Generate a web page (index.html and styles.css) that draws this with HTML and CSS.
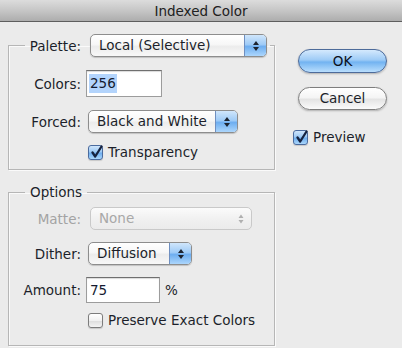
FILE: index.html
```html
<!DOCTYPE html>
<html>
<head>
<meta charset="utf-8">
<title>Indexed Color</title>
<link rel="stylesheet" href="styles.css">
</head>
<body>
<div class="titlebar">Indexed Color</div>
<div class="dialog">
  <div class="left">
    <fieldset class="group g1">
      <legend class="legend-row">
        <span class="lbl lbl-legend">Palette:</span>
        <span class="popup popup-palette"><span class="ptext">Local (Selective)</span><span class="stepper"><svg width="8" height="12" viewBox="0 0 8 12"><path d="M4 1 L7 5 L1 5 Z M4 11 L7 7 L1 7 Z" fill="#1d2430"/></svg></span></span>
      </legend>
      <div class="row row-colors">
        <span class="lbl">Colors:</span>
        <span class="field field-colors"><span class="sel">256</span></span>
      </div>
      <div class="row row-forced">
        <span class="lbl">Forced:</span>
        <span class="popup popup-forced"><span class="ptext">Black and White</span><span class="stepper"><svg width="8" height="12" viewBox="0 0 8 12"><path d="M4 1 L7 5 L1 5 Z M4 11 L7 7 L1 7 Z" fill="#1d2430"/></svg></span></span>
      </div>
      <div class="row row-transp">
        <span class="check checked"><svg width="15" height="15" viewBox="0 0 15 15"><path d="M3.5 7.5 L6.2 11.5 L12.5 1.5" fill="none" stroke="#15223f" stroke-width="2.3" stroke-linecap="round" stroke-linejoin="round"/></svg></span>
        <span class="ctext">Transparency</span>
      </div>
    </fieldset>
    <fieldset class="group g2">
      <legend class="legend-text">Options</legend>
      <div class="row row-matte">
        <span class="lbl disabled">Matte:</span>
        <span class="popup popup-matte disabled"><span class="ptext">None</span><span class="stepper stepper-off"><svg width="8" height="12" viewBox="0 0 8 12"><path d="M4 1.5 L6.5 5 L1.5 5 Z M4 10.5 L6.5 7 L1.5 7 Z" fill="#b0b0b0"/></svg></span></span>
      </div>
      <div class="row row-dither">
        <span class="lbl">Dither:</span>
        <span class="popup popup-dither"><span class="ptext">Diffusion</span><span class="stepper"><svg width="8" height="12" viewBox="0 0 8 12"><path d="M4 1 L7 5 L1 5 Z M4 11 L7 7 L1 7 Z" fill="#1d2430"/></svg></span></span>
      </div>
      <div class="row row-amount">
        <span class="lbl">Amount:</span>
        <span class="field field-amount">75</span>
        <span class="unit">%</span>
      </div>
      <div class="row row-preserve">
        <span class="check"></span>
        <span class="ctext">Preserve Exact Colors</span>
      </div>
    </fieldset>
  </div>
  <div class="right">
    <div class="btn btn-ok">OK</div>
    <div class="btn btn-cancel">Cancel</div>
    <div class="row row-preview">
      <span class="check checked"><svg width="15" height="15" viewBox="0 0 15 15"><path d="M3.5 7.5 L6.2 11.5 L12.5 1.5" fill="none" stroke="#15223f" stroke-width="2.3" stroke-linecap="round" stroke-linejoin="round"/></svg></span>
      <span class="ctext">Preview</span>
    </div>
  </div>
</div>
</body>
</html>
```
FILE: styles.css
```css
html, body {
  margin: 0;
  padding: 0;
}
body {
  width: 402px;
  height: 348px;
  overflow: hidden;
  background: #ebebeb;
  font-family: "DejaVu Sans", "Liberation Sans", sans-serif;
  font-size: 13.5px;
  color: #1c1f2a;
}
.titlebar {
  height: 21px;
  line-height: 22px;
  text-align: center;
  background: linear-gradient(#dcdcdc, #c6c6c6 50%, #adadad);
  border-bottom: 1px solid #5e5e5e;
  color: #202020;
}
.dialog {
  display: flex;
  align-items: flex-start;
  padding: 12px 0 0 8px;
}
.left {
  width: 267px;
}
.group {
  margin: 0;
  padding: 0;
  border: 1px solid #b6b6b6;
  box-shadow: 1px 1px 0 #fafafa, inset 1px 1px 0 #fafafa;
  min-width: 0;
}
.g1 {
  padding-bottom: 9px;
}
.g2 {
  margin-top: 14px;
  padding-bottom: 17px;
}
.legend-row {
  display: flex;
  align-items: center;
  margin-left: 16px;
  padding: 0 3px 0 0;
}
.legend-text {
  margin-left: 16px;
  padding: 0 5px;
  line-height: 17px;
}
.row {
  display: flex;
  align-items: center;
}
.lbl {
  width: 72px;
  text-align: right;
  flex: none;
}
.lbl-legend {
  width: 56px;
}
.lbl.disabled {
  color: #a3a3a3;
}
.popup {
  display: flex;
  align-items: stretch;
  height: 23px;
  box-sizing: border-box;
  border: 1px solid #8d8d8d;
  border-radius: 5px;
  background: linear-gradient(#ffffff, #f7f7f7 45%, #ececec 55%, #f8f8f8);
  box-shadow: 0 1px 1px rgba(0, 0, 0, 0.18);
  overflow: hidden;
}
.ptext {
  flex: 1;
  padding-left: 8px;
  line-height: 21px;
  white-space: nowrap;
}
.stepper {
  width: 21px;
  flex: none;
  display: flex;
  align-items: center;
  justify-content: center;
  border-left: 1px solid #6f8fc0;
  background: linear-gradient(#d0e6fb, #9fcbf7 45%, #6eaef0 55%, #acd6fc);
}
.stepper-off {
  border-left: none;
  background: transparent;
}
.popup.disabled {
  border-color: #c9c9c9;
  color: #a8a8a8;
  box-shadow: none;
  background: linear-gradient(#fbfbfb, #f1f1f1 50%, #ebebeb);
}
.popup-palette {
  margin-left: 9px;
  width: 177px;
}
.row-colors {
  margin-top: 13px;
}
.field {
  box-sizing: border-box;
  background: #fff;
  border: 1px solid #9c9c9c;
  border-top-color: #6f6f6f;
  box-shadow: inset 0 1px 1px rgba(0, 0, 0, 0.15);
  display: flex;
  align-items: center;
  padding-left: 2px;
  color: #141a30;
}
.field-colors {
  margin-left: 5px;
  width: 76px;
  height: 27px;
}
.sel {
  background: #b3d4fc;
  padding: 0 1px;
  line-height: 19px;
}
.row-forced {
  margin-top: 13px;
}
.popup-forced {
  margin-left: 7px;
  width: 150px;
}
.row-transp {
  margin-top: 11px;
  padding-left: 79px;
}
.check {
  width: 15px;
  height: 15px;
  box-sizing: border-box;
  border: 1px solid #7c7c7c;
  border-radius: 3px;
  background: linear-gradient(#ffffff, #f1f1f1 50%, #dedede 55%, #f4f4f4);
  box-shadow: 0 1px 1px rgba(0, 0, 0, 0.15);
  position: relative;
  flex: none;
}
.check.checked {
  border-color: #4b6b9e;
  background: linear-gradient(#cfe5fb, #9dc9f4 45%, #6faeee 55%, #aad6fb);
}
.check svg {
  position: absolute;
  left: 0;
  top: -1px;
}
.ctext {
  margin-left: 5px;
}
.row-matte {
  margin-top: 6px;
}
.popup-matte {
  margin-left: 9px;
  width: 162px;
}
.row-dither {
  margin-top: 12px;
}
.popup-dither {
  margin-left: 7px;
  width: 104px;
}
.row-amount {
  margin-top: 12px;
}
.field-amount {
  margin-left: 5px;
  width: 74px;
  height: 26px;
  padding-left: 3px;
}
.unit {
  margin-left: 5px;
}
.row-preserve {
  margin-top: 9px;
  padding-left: 79px;
}
.right {
  margin-left: 18px;
  padding-top: 15px;
  display: flex;
  flex-direction: column;
  align-items: flex-start;
}
.btn {
  margin-left: 5px;
  width: 89px;
  box-sizing: border-box;
  text-align: center;
  border-radius: 12px;
  box-shadow: 0 1px 2px rgba(0, 0, 0, 0.25);
}
.btn-ok {
  height: 24px;
  line-height: 22px;
  border: 1px solid #4d6b9a;
  background: linear-gradient(#d4e9fd, #9ecbf6 45%, #72b3f1 55%, #b9defd);
  color: #0b0f1a;
}
.btn-cancel {
  margin-top: 14px;
  height: 23px;
  line-height: 21px;
  border: 1px solid #7e7e7e;
  background: linear-gradient(#ffffff, #f5f5f5 45%, #e4e4e4 55%, #fbfbfb);
}
.row-preview {
  margin-top: 19px;
}
```
